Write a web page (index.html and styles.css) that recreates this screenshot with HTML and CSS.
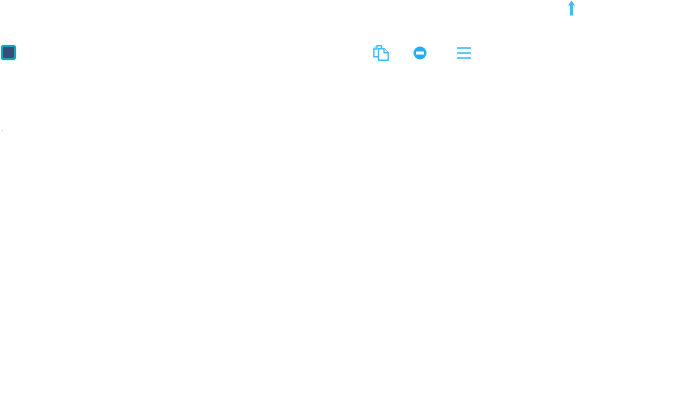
FILE: index.html
```html
<!doctype html>
<html>

<head>
    <meta charset="utf-8">
    <title>List</title>
    <link rel="stylesheet" href="styles.css">
</head>

<body>
    <div class="top">
        <svg class="arrow" width="9" height="16" viewBox="0 0 9 16">
            <path d="M4.5 .5L8 5.5H6V15.5H3V5.5H1Z" fill="#3fbdf9"/>
        </svg>
    </div>
    <div class="row">
        <span class="check"></span>
        <div class="tools">
            <svg width="16" height="16" viewBox="0 0 16 16" fill="#fff" stroke="#42bcf8" stroke-width="1.4" stroke-linejoin="round">
                <path d="M4 .8H8.5V11.8H.8V4Z"/>
                <path d="M4 .8V4H.8"/>
                <path d="M5.5 3.8H11L15.2 7.8V15.2H5.5Z"/>
                <path d="M11 3.8V7.8H15.2"/>
            </svg>
            <svg width="14" height="14" viewBox="0 0 14 14">
                <circle cx="7" cy="7" r="6.5" fill="#23adf7"/>
                <rect x="3" y="5.5" width="8" height="3" fill="#fff"/>
            </svg>
            <svg width="14" height="12" viewBox="0 0 14 12">
                <path d="M0 1H14M0 6H14M0 11H14" stroke="#2fb6fa" stroke-width="1.6"/>
            </svg>
        </div>
    </div>
    <div class="dot"></div>
</body>

</html>
```

FILE: styles.css
```css
body {
    margin: 0;
    background-color: #fff;
    font-family: 'Liberation Sans', sans-serif;
}
svg {
    display: block;
}
.top {
    height: 16px;
    padding-left: 567px;
}
.row {
    display: flex;
    align-items: center;
    margin-top: 28px;
    padding-left: 1px;
}
.check {
    width: 11px;
    height: 11px;
    background-color: #3b4a78;
    border: 2px solid #10a6b8;
    border-radius: 3px;
    box-shadow: 0 0 1px #10a6b8;
}
.tools {
    display: flex;
    align-items: center;
    margin-left: 357px;
    padding-top: 1px;
}
.tools svg:nth-child(2) {
    margin-left: 24px;
}
.tools svg:nth-child(3) {
    margin-left: 30px;
}
.dot {
    width: 1px;
    height: 1px;
    margin: 69px 0 0 2px;
    background-color: #c8c8c8;
}
```
